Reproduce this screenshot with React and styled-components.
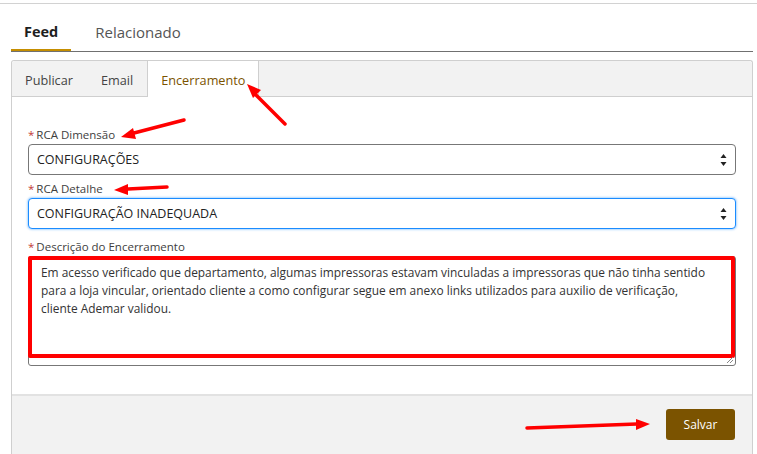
import React from "react";
import styled, { createGlobalStyle } from "styled-components";

const GlobalStyle = createGlobalStyle`
  html, body { margin: 0; padding: 0; background: #fff; }
  body { font-family: "Open Sans", "Noto Sans", Arial, sans-serif; color: #222; }
  * { box-sizing: border-box; }
`;

const Page = styled.div`
  position: relative;
  width: 757px;
  height: 454px;
  overflow: hidden;
  background: #fff;
`;

const TopRule = styled.div`
  height: 4px;
  border-bottom: 1px solid #d2d2d2;
`;

const Content = styled.div`
  padding: 0 4px 0 11px;
`;

const MainTabs = styled.div`
  display: flex;
  gap: 11px;
  border-bottom: 1px solid #707070;
`;

const MainTab = styled.div`
  height: 47px;
  display: flex;
  align-items: center;
  padding: 10px 13px 0;
  font-size: ${(p) => (p.$active ? "14.5px" : "15px")};
  font-weight: ${(p) => (p.$active ? 700 : 400)};
  color: ${(p) => (p.$active ? "#1e1e1e" : "#555")};
  border-bottom: 2px solid ${(p) => (p.$active ? "#c58e00" : "transparent")};
`;

const Panel = styled.div`
  margin-top: 8px;
  border: 1px solid #cfcfcf;
  border-bottom: none;
  border-radius: 3px 3px 0 0;
  height: 394px;
  display: flex;
  flex-direction: column;
`;

const SubTabs = styled.div`
  display: flex;
  height: 36px;
  background: #f2f2f2;
  border-bottom: 1px solid #cfcfcf;
  border-radius: 3px 3px 0 0;
`;

const SubTab = styled.div`
  display: flex;
  align-items: center;
  padding: 2px 13px 0;
  margin-bottom: -1px;
  font-size: 12.7px;
  color: ${(p) => (p.$active ? "#7b5300" : "#444")};
  background: ${(p) => (p.$active ? "#fff" : "transparent")};
  border-left: 1px solid ${(p) => (p.$active ? "#cfcfcf" : "transparent")};
  border-right: 1px solid ${(p) => (p.$active ? "#cfcfcf" : "transparent")};
  &:first-child {
    padding-left: 12px;
  }
`;

const Body = styled.div`
  padding: 30px 16px 28px;
`;

const Field = styled.div`
  margin-top: ${(p) => p.$top || 0}px;
`;

const Label = styled.div`
  height: 16px;
  line-height: 16px;
  margin-bottom: 1px;
  font-size: 11.5px;
  color: #3e3e3e;
  display: flex;
  gap: 2px;
`;

const Req = styled.span`
  color: #c23934;
`;

const SelectWrap = styled.div`
  position: relative;
  height: 31px;
  border: 1px solid ${(p) => (p.$focus ? "#1b8cff" : "#777")};
  border-radius: 4px;
  box-shadow: ${(p) => (p.$focus ? "0 0 2px 1px rgba(27,140,255,0.35)" : "none")};
  display: flex;
  align-items: center;
  padding-left: 8px;
  font-size: 12.5px;
  color: #222;
  background: #fff;
`;

const Spinner = styled.svg`
  position: absolute;
  right: 8px;
  top: 50%;
  transform: translateY(-50%);
`;

const AreaWrap = styled.div`
  position: relative;
  height: 110px;
  border: 1px solid #777;
  border-radius: 3px;
  padding: 6px 12px;
  font-size: 11.9px;
  line-height: 18px;
  color: #333;
  white-space: pre;
`;

const Grip = styled.svg`
  position: absolute;
  right: 1px;
  bottom: 1px;
`;

const Highlight = styled.div`
  position: absolute;
  left: -1px;
  top: -1px;
  width: 707px;
  height: 102px;
  border: 4px solid #ff0000;
  border-radius: 2px;
`;

const Footer = styled.div`
  flex: 1;
  background: #f2f2f2;
  border-top: 2px solid #e2e2e2;
  display: flex;
  justify-content: flex-end;
  align-items: flex-start;
  padding: 13px 17px 0 0;
`;

const Button = styled.button`
  width: 69px;
  height: 31px;
  border: none;
  border-radius: 3px;
  background: #7b5300;
  color: #fff;
  font-family: inherit;
  font-size: 12px;
  padding: 0;
`;

const Annotations = styled.svg`
  position: absolute;
  left: 0;
  top: 0;
  pointer-events: none;
`;

const arrows = [
  { tail: [285, 124], line: [256, 95], head: "247,84 261,90 253,98" },
  { tail: [184, 120], line: [134, 133], head: "121,137 136,139 133,128" },
  { tail: [167, 187], line: [128, 189], head: "114,190 128,195 128,184" },
  { tail: [527, 428], line: [637, 424], head: "650,424 636,430 636,419" },
];

const SelectArrows = () => (
  <Spinner width="7" height="14" viewBox="0 0 7 14">
    <polygon points="3.5,1 6.5,5 0.5,5" fill="#222" />
    <polygon points="0.5,9 6.5,9 3.5,13" fill="#222" />
  </Spinner>
);

const text =
  "Em acesso verificado que departamento, algumas impressoras estavam vinculadas a impressoras que não tinha sentido\npara a loja vincular, orientado cliente a como configurar segue em anexo links utilizados para auxilio de verificação,\ncliente Ademar validou.";

export default function App() {
  return (
    <Page>
      <GlobalStyle />
      <TopRule />
      <Content>
        <MainTabs>
          <MainTab $active>Feed</MainTab>
          <MainTab>Relacionado</MainTab>
        </MainTabs>
        <Panel>
          <SubTabs>
            <SubTab>Publicar</SubTab>
            <SubTab>Email</SubTab>
            <SubTab $active>Encerramento</SubTab>
          </SubTabs>
          <Body>
            <Field>
              <Label>
                <Req>*</Req>RCA Dimensão
              </Label>
              <SelectWrap>
                CONFIGURAÇÕES
                <SelectArrows />
              </SelectWrap>
            </Field>
            <Field $top={6}>
              <Label>
                <Req>*</Req>RCA Detalhe
              </Label>
              <SelectWrap $focus>
                CONFIGURAÇÃO INADEQUADA
                <SelectArrows />
              </SelectWrap>
            </Field>
            <Field $top={10}>
              <Label>
                <Req>*</Req>Descrição do Encerramento
              </Label>
              <AreaWrap>
                {text}
                <Highlight />
                <Grip width="8" height="8" viewBox="0 0 8 8">
                  <line x1="1" y1="7" x2="7" y2="1" stroke="#888" strokeWidth="1" />
                  <line x1="4" y1="7" x2="7" y2="4" stroke="#888" strokeWidth="1" />
                </Grip>
              </AreaWrap>
            </Field>
          </Body>
          <Footer>
            <Button>Salvar</Button>
          </Footer>
        </Panel>
      </Content>
      <Annotations width="757" height="454" viewBox="0 0 757 454">
        {arrows.map((a, i) => (
          <g key={i}>
            <line
              x1={a.tail[0]}
              y1={a.tail[1]}
              x2={a.line[0]}
              y2={a.line[1]}
              stroke="#ff0000"
              strokeWidth="3.5"
              strokeLinecap="round"
            />
            <polygon points={a.head} fill="#ff0000" />
          </g>
        ))}
      </Annotations>
    </Page>
  );
}
